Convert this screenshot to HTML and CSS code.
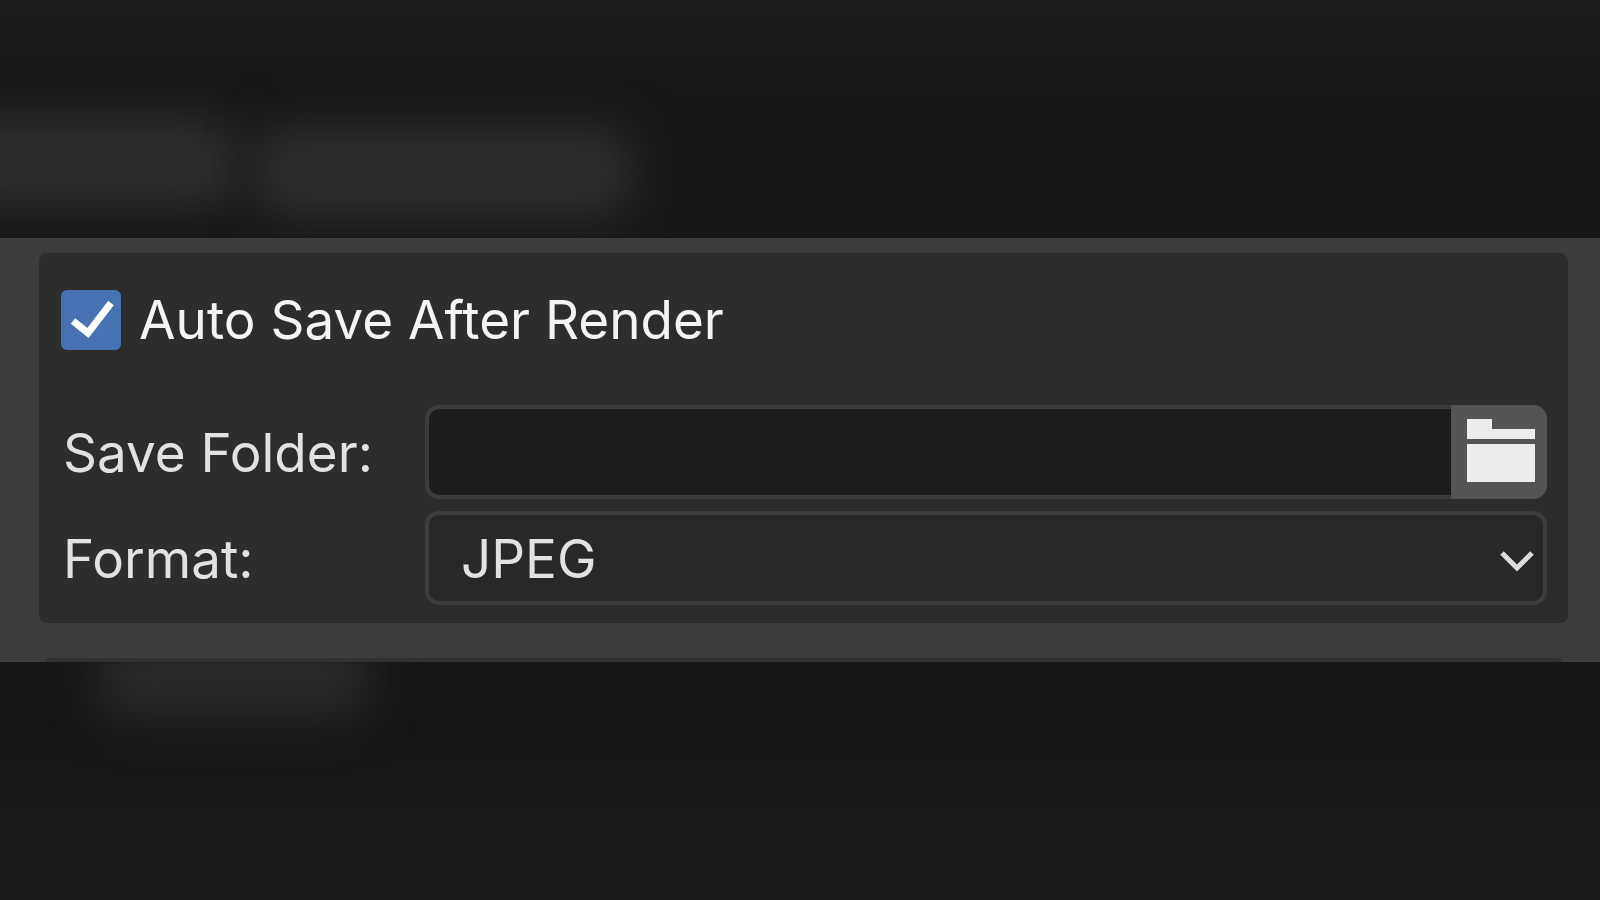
FILE: index.html
```
<!DOCTYPE html>
<html lang="en">
<head>
    <meta charset="UTF-8">
    <title>Auto Save After Render</title>
    <meta name="viewport" content="width=device-width, initial-scale=1.0">
    <link rel="stylesheet" href="styles.css">
</head>
<body>
    <div class="backdrop backdrop-top">
        <span class="glow glow-left"></span>
        <span class="glow glow-right"></span>
    </div>
    <main class="band">
        <form class="panel">
            <div class="check-row">
                <span class="checkbox">
                    <input type="checkbox" id="autoSave" checked>
                    <svg viewBox="0 0 60 60" aria-hidden="true">
                        <path d="M12 31 L27 43 L50 13" />
                    </svg>
                </span>
                <label for="autoSave">Auto Save After Render</label>
            </div>
            <div class="row">
                <label for="saveFolder">Save Folder:</label>
                <div class="path-field">
                    <input type="text" id="saveFolder">
                    <button type="button" aria-label="Choose folder">
                        <svg viewBox="0 0 68 63" aria-hidden="true">
                            <path d="M0 0 H25 V10 H68 V20 H0 Z M0 25 H68 V63 H0 Z" />
                        </svg>
                    </button>
                </div>
            </div>
            <div class="row">
                <label for="format">Format:</label>
                <div class="select-field">
                    <select id="format">
                        <option selected>JPEG</option>
                        <option>PNG</option>
                    </select>
                    <svg viewBox="0 0 36 22" aria-hidden="true">
                        <path d="M3 3 L18 18 L33 3" />
                    </svg>
                </div>
            </div>
        </form>
        <div class="next-panel"></div>
    </main>
    <div class="backdrop backdrop-bottom">
        <span class="glow glow-bottom"></span>
    </div>
</body>
</html>
```

FILE: styles.css
```
* {
    box-sizing: border-box;
}
body {
    margin: 0;
    min-height: 100vh;
    display: grid;
    grid-template-rows: 1fr auto 1fr;
    background-color: #181818;
    color: #e2e2e2;
    font-family: Inter, sans-serif;
    font-size: 53px;
    line-height: 60px;
}
.backdrop {
    position: relative;
    overflow: hidden;
}
.backdrop-top {
    background: linear-gradient(#1c1c1c, #171717 40%);
}
.backdrop-bottom {
    background: linear-gradient(#161616 30%, #1b1b1b 80%);
}
/* blurred text behind the band */
.glow {
    position: absolute;
    background-color: #2e2e2e;
    border-radius: 20px;
    filter: blur(24px);
}
.glow-left {
    left: -60px;
    top: 118px;
    width: 296px;
    height: 88px;
}
.glow-right {
    left: 256px;
    top: 128px;
    width: 374px;
    height: 88px;
}
.glow-bottom {
    left: 98px;
    top: -30px;
    width: 270px;
    height: 86px;
    background-color: #292929;
}
.band {
    background-color: #3d3d3d;
    padding: 15px 32px 0 39px;
}
.panel {
    background-color: #2d2d2d;
    border-radius: 8px;
    padding: 37px 21px 18px 22px;
    display: flex;
    flex-direction: column;
    gap: 12px;
}
.next-panel {
    height: 4px;
    margin: 35px 6px 0;
    background-color: #323232;
    border-radius: 4px 4px 0 0;
}
.check-row {
    display: flex;
    align-items: center;
    gap: 18px;
    margin-bottom: 43px;
    color: #f4f4f4;
}
.checkbox {
    display: grid;
    width: 60px;
    height: 60px;
}
.checkbox input,
.checkbox svg {
    grid-area: 1 / 1;
    width: 100%;
    height: 100%;
    margin: 0;
}
.checkbox input {
    appearance: none;
    background-color: #4772b3;
    border-radius: 6px;
}
.checkbox svg {
    pointer-events: none;
    visibility: hidden;
    fill: none;
    stroke: #fff;
    stroke-width: 7;
}
.checkbox input:checked + svg {
    visibility: visible;
}
.row {
    display: grid;
    grid-template-columns: 364px 1fr;
    align-items: center;
}
.row label {
    padding: 2px 0 0 2px;
}
.path-field {
    display: flex;
    height: 94px;
}
.path-field input {
    flex: 1;
    min-width: 0;
    padding: 0 32px;
    border: 4px solid #3d3d3d;
    border-right: none;
    border-radius: 14px 0 0 14px;
    outline: none;
    background-color: #1d1d1d;
    color: inherit;
    font: inherit;
}
.path-field button {
    display: flex;
    align-items: center;
    justify-content: center;
    width: 96px;
    padding: 0 0 4px 4px;
    border: none;
    border-radius: 0 14px 14px 0;
    background-color: #545454;
    cursor: pointer;
}
.path-field svg {
    width: 68px;
    height: 63px;
    fill: #ececec;
}
.select-field {
    display: grid;
    align-items: center;
}
.select-field select,
.select-field svg {
    grid-area: 1 / 1;
}
.select-field select {
    appearance: none;
    width: 100%;
    height: 94px;
    padding: 2px 32px 0;
    border: 4px solid #3d3d3d;
    border-radius: 14px;
    background-color: #282828;
    color: inherit;
    font: inherit;
}
.select-field svg {
    justify-self: end;
    width: 36px;
    height: 22px;
    margin: 6px 12px 0 0;
    pointer-events: none;
    fill: none;
    stroke: #dcdcdc;
    stroke-width: 5;
}
```
